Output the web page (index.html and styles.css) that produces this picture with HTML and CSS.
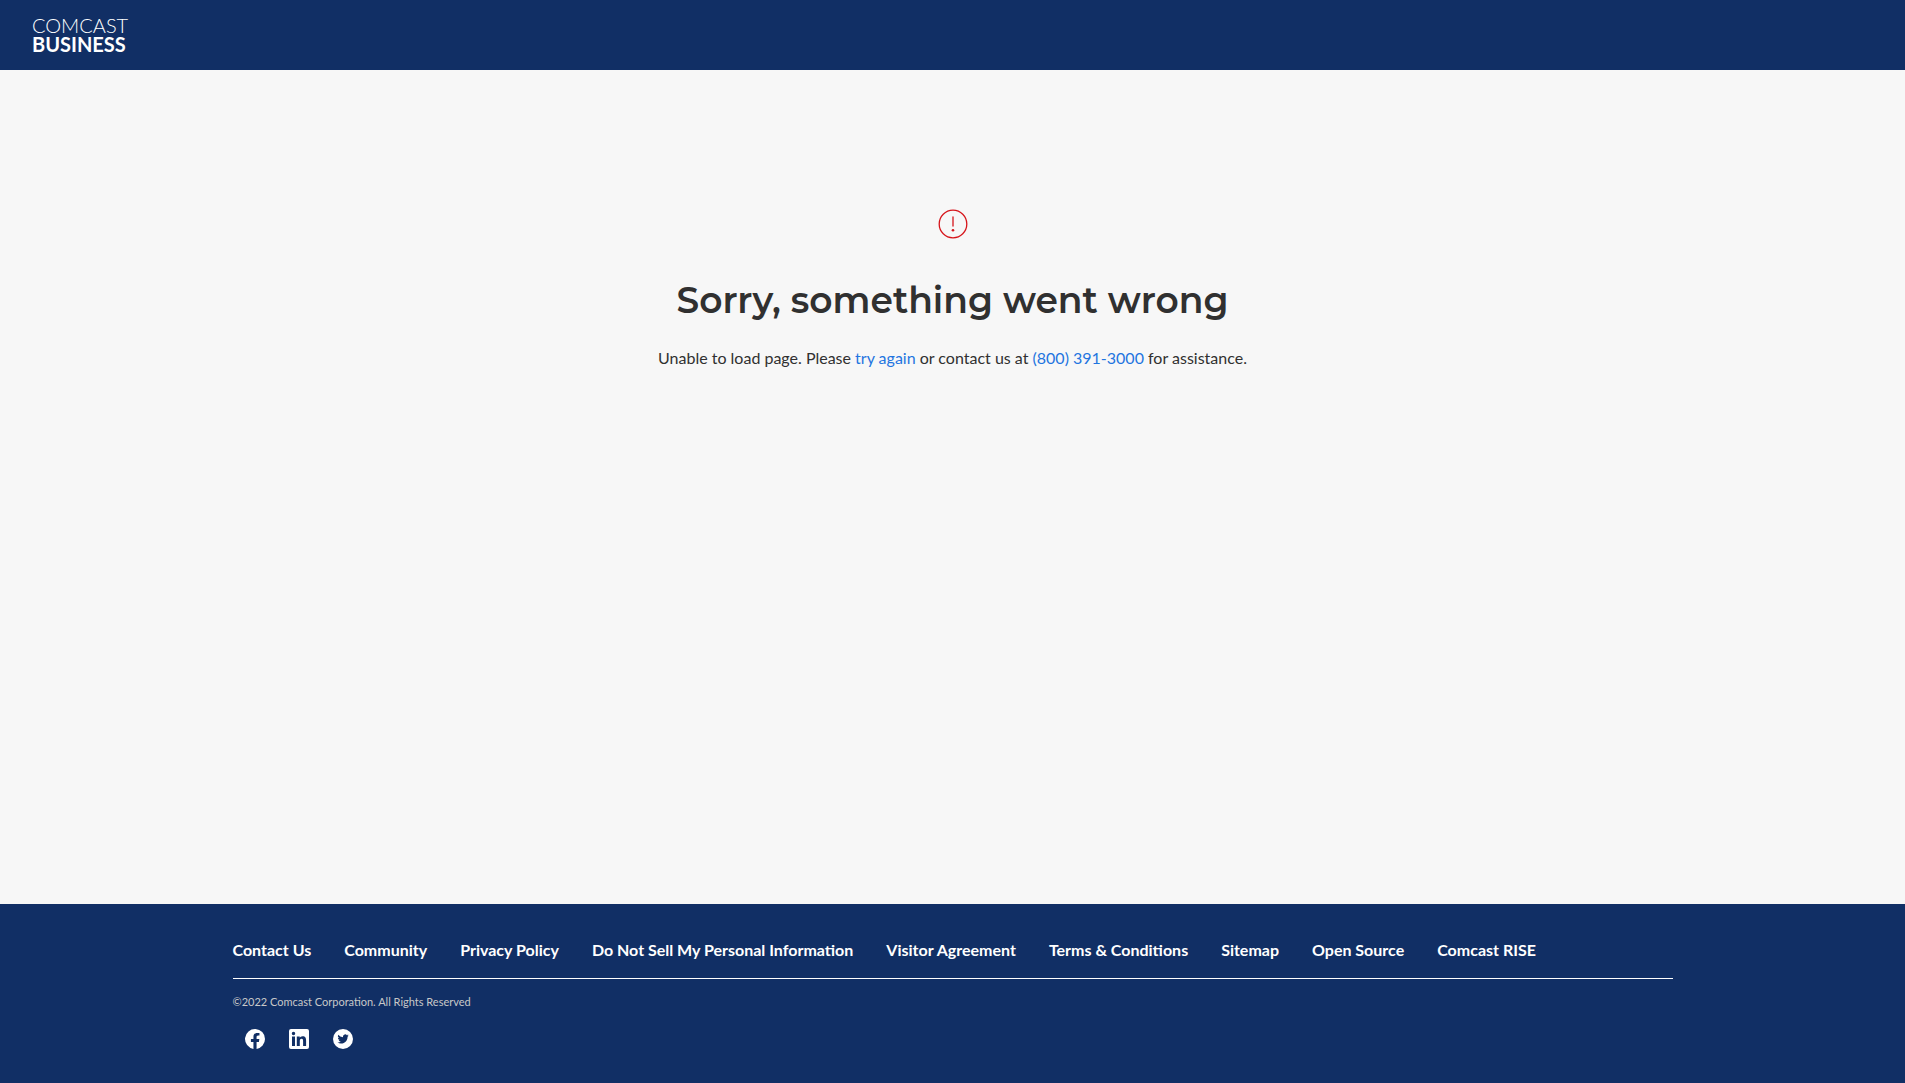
FILE: index.html
```html
<!DOCTYPE html>
<html lang="en">
<head>
<meta charset="utf-8">
<meta name="viewport" content="width=device-width, initial-scale=1">
<title>Comcast Business</title>
<link rel="stylesheet" href="styles.css">
</head>
<body>
<header class="site-header">
  <a class="logo" href="#" aria-label="Comcast Business home">
    <span class="logo-light">COMCAST</span>
    <span class="logo-bold">BUSINESS</span>
  </a>
</header>
<main class="error">
  <svg class="error-icon" viewBox="0 0 32 32" aria-hidden="true">
    <circle cx="16" cy="16" r="13.8" fill="none" stroke="currentColor" stroke-width="1.3"/>
    <path d="M16 9v9" fill="none" stroke="currentColor" stroke-width="1.3" stroke-linecap="round"/>
    <circle cx="16" cy="22.2" r="1.3" fill="currentColor"/>
  </svg>
  <h1 class="error-title">Sorry, something went wrong</h1>
  <p class="error-text">Unable to load page. Please <a href="#">try again</a> or contact us at <a href="tel:8003913000">(800) 391-3000</a> for assistance.</p>
</main>
<footer class="site-footer">
  <div class="footer-inner">
    <nav class="footer-nav" aria-label="Footer">
      <a href="#">Contact Us</a>
      <a href="#">Community</a>
      <a href="#">Privacy Policy</a>
      <a href="#">Do Not Sell My Personal Information</a>
      <a href="#">Visitor Agreement</a>
      <a href="#">Terms &amp; Conditions</a>
      <a href="#">Sitemap</a>
      <a href="#">Open Source</a>
      <a href="#">Comcast RISE</a>
    </nav>
    <p class="copyright">©2022 Comcast Corporation. All Rights Reserved</p>
    <div class="social">
      <a href="#" aria-label="Facebook"><svg viewBox="0 0 24 24"><path d="M22 12a10 10 0 1 0-11.560 9.880v-6.990H7.900V12h2.540V9.800c0-2.510 1.490-3.890 3.780-3.890 1.090 0 2.240.19 2.240.19v2.460H15.200c-1.240 0-1.630.77-1.630 1.560V12h2.780l-.45 2.890h-2.330v6.990A10 10 0 0 0 22 12z"/></svg></a>
      <a href="#" aria-label="LinkedIn"><svg viewBox="0 0 24 24"><path fill-rule="evenodd" d="M4 2h16a2 2 0 0 1 2 2v16a2 2 0 0 1-2 2H4a2 2 0 0 1-2-2V4a2 2 0 0 1 2-2zM5 9.500V19h3V9.500zM6.500 4.750a1.720 1.720 0 1 0 0 3.440 1.720 1.720 0 0 0 0-3.440zM9.800 9.500V19h3v-4.700c0-1.250.25-2.450 1.780-2.450s1.520 1.420 1.520 2.530V19h3v-5.220c0-2.560-.55-4.530-3.540-4.530-1.440 0-2.400.79-2.800 1.540h-.04V9.500z"/></svg></a>
      <a href="#" aria-label="Twitter"><svg viewBox="0 0 24 24"><path fill-rule="evenodd" d="M12 2a10 10 0 1 0 0 20 10 10 0 0 0 0-20zM16.540 9.700c.01.100.01.200.01.300 0 3.050-2.320 6.560-6.560 6.560a6.500 6.500 0 0 1-3.540-1.030 4.650 4.650 0 0 0 3.410-.96 2.310 2.310 0 0 1-2.160-1.600c.35.050.67.050 1.040-.04a2.300 2.300 0 0 1-1.850-2.260v-.03c.31.170.67.280 1.040.29a2.300 2.300 0 0 1-.71-3.080 6.540 6.540 0 0 0 4.760 2.410 2.310 2.310 0 0 1 3.930-2.110 4.570 4.570 0 0 0 1.460-.56 2.290 2.290 0 0 1-1.020 1.270 4.650 4.650 0 0 0 1.330-.36 4.800 4.800 0 0 1-1.140 1.200z"/></svg></a>
    </div>
  </div>
</footer>
</body>
</html>
```
FILE: styles.css
```css
* { box-sizing: border-box; }

body {
  margin: 0;
  min-height: 100vh;
  display: flex;
  flex-direction: column;
  background: #f7f7f7;
  color: #303030;
  font: 16px/24px Lato, "Liberation Sans", sans-serif;
}

.site-header {
  display: flex;
  padding: 16px 32px;
  background: #112f65;
}

.logo {
  display: flex;
  flex-direction: column;
  color: #fff;
  font-size: 20px;
  line-height: 19px;
  text-decoration: none;
}
.logo-light { font-weight: 300; }
.logo-bold { font-weight: 700; }

.error {
  flex: 1;
  display: flex;
  flex-direction: column;
  align-items: center;
  padding: 138px 24px 48px;
  text-align: center;
}
.error-icon {
  width: 32px;
  height: 32px;
  color: #d6151b;
}
.error-title {
  margin: 36px 0 0;
  font: 600 36px/48px Montserrat, Inter, sans-serif;
}
.error-text { margin: 22px 0 0; }
.error-text a {
  color: #1f75e0;
  text-decoration: none;
}

.site-footer {
  padding: 34px 24px 32px;
  background: #112f65;
  color: #fff;
}
.footer-inner {
  max-width: 1440px;
  margin: 0 auto;
}
.footer-nav {
  display: flex;
  flex-wrap: wrap;
  gap: 8px 33px;
  padding-bottom: 16px;
  border-bottom: 1px solid #fff;
  font-weight: 700;
}
.footer-nav a {
  color: #fff;
  text-decoration: none;
}
.copyright {
  margin: 15px 0 0;
  color: #c8c8c8;
  font-size: 11px;
  line-height: 16px;
}
.social {
  display: flex;
  gap: 20px;
  margin-top: 17px;
  padding-left: 10px;
}
.social a {
  display: flex;
  color: #fff;
}
.social svg {
  width: 24px;
  height: 24px;
  fill: currentColor;
}
```
